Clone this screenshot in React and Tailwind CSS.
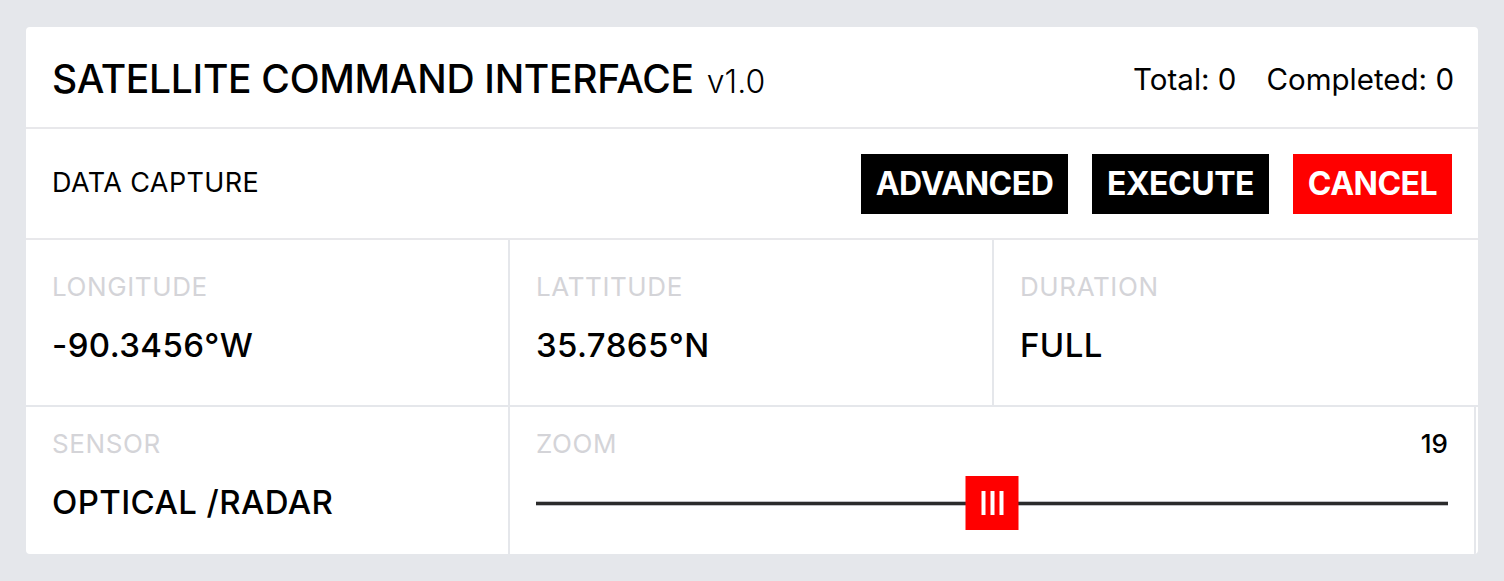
import React, { useState } from 'react';

const Field = ({ label, value, className = '' }) => (
  <div className={`border-gray-200 ${className}`}>
    <div className="text-[26px] leading-[39px] tracking-[0.6px] text-[#d4d4d8]">{label}</div>
    <div className="mt-[17px] text-[33px] leading-[45px] font-medium tracking-[0.4px] text-black">{value}</div>
  </div>
);

const SatelliteCommand = () => {
  const [zoom] = useState(19);
  const [stats] = useState({ total: 0, completed: 0 });

  return (
    <div className="min-h-screen bg-[#e5e7eb] pt-[27px] pb-[27px] px-[26px] font-['Inter',sans-serif] text-black">
      <div className="bg-white rounded-[4px] overflow-hidden">
        {/* Header */}
        <div className="h-[102px] px-[26px] pt-[5px] flex items-center justify-between border-b-2 border-[#e8e8eb]">
          <div className="flex items-baseline gap-[13px]">
            <h1 className="text-[39px] font-medium tracking-[-0.3px]">SATELLITE COMMAND INTERFACE</h1>
            <span className="text-[32px] font-light">v1.0</span>
          </div>
          <div className="flex items-center gap-[30px] text-[29.5px] mr-[-2px]">
            <span>Total: {stats.total}</span>
            <span>Completed: {stats.completed}</span>
          </div>
        </div>

        {/* Actions */}
        <div className="h-[111px] px-[26px] flex items-center justify-between border-b-2 border-[#e8e8eb]">
          <span className="text-[27px] tracking-[0.4px]">DATA CAPTURE</span>
          <div className="flex items-center gap-[24px]">
            <button className="w-[207px] h-[60px] bg-black text-white text-[32px] font-bold tracking-[-0.5px]">ADVANCED</button>
            <button className="w-[177px] h-[60px] bg-black text-white text-[32px] font-bold tracking-[-0.5px]">EXECUTE</button>
            <button className="w-[159px] h-[60px] bg-[#ff0000] text-white text-[32px] font-bold tracking-[-0.5px]">CANCEL</button>
          </div>
        </div>

        {/* Parameters */}
        <div className="grid grid-cols-3">
          <Field label="LONGITUDE" value="-90.3456°W" className="pt-[27px] pb-[37px] px-[26px] border-r-2 border-b-2" />
          <Field label="LATTITUDE" value="35.7865°N" className="pt-[27px] pb-[37px] px-[26px] border-r-2 border-b-2" />
          <Field label="DURATION" value="FULL" className="pt-[27px] pb-[37px] px-[26px] border-b-2" />

          <Field label="SENSOR" value="OPTICAL /RADAR" className="pt-[17px] pb-[29px] px-[26px] border-r-2" />
          <div className="col-span-2 pt-[17px] pb-[22px] px-[26px] border-r-2 border-gray-200 mr-[2px]">
            <div className="flex items-center justify-between">
              <span className="text-[26px] leading-[39px] tracking-[0.6px] text-[#d4d4d8]">ZOOM</span>
              <span className="text-[26px] leading-[39px] font-medium">{zoom}</span>
            </div>
            <div className="relative h-[54px] mt-[13px] flex items-center">
              <div className="w-full h-[5px] bg-[#2b2b2b] border-y border-[#c0c0c4]" />
              <div className="absolute left-1/2 top-0 -translate-x-1/2 w-[53px] h-[54px] bg-[#ff0000] flex items-center justify-center gap-[5px]">
                <span className="w-[4px] h-[24px] bg-white" />
                <span className="w-[4px] h-[24px] bg-white" />
                <span className="w-[4px] h-[24px] bg-white" />
              </div>
            </div>
          </div>
        </div>
      </div>
    </div>
  );
};

export default SatelliteCommand;
